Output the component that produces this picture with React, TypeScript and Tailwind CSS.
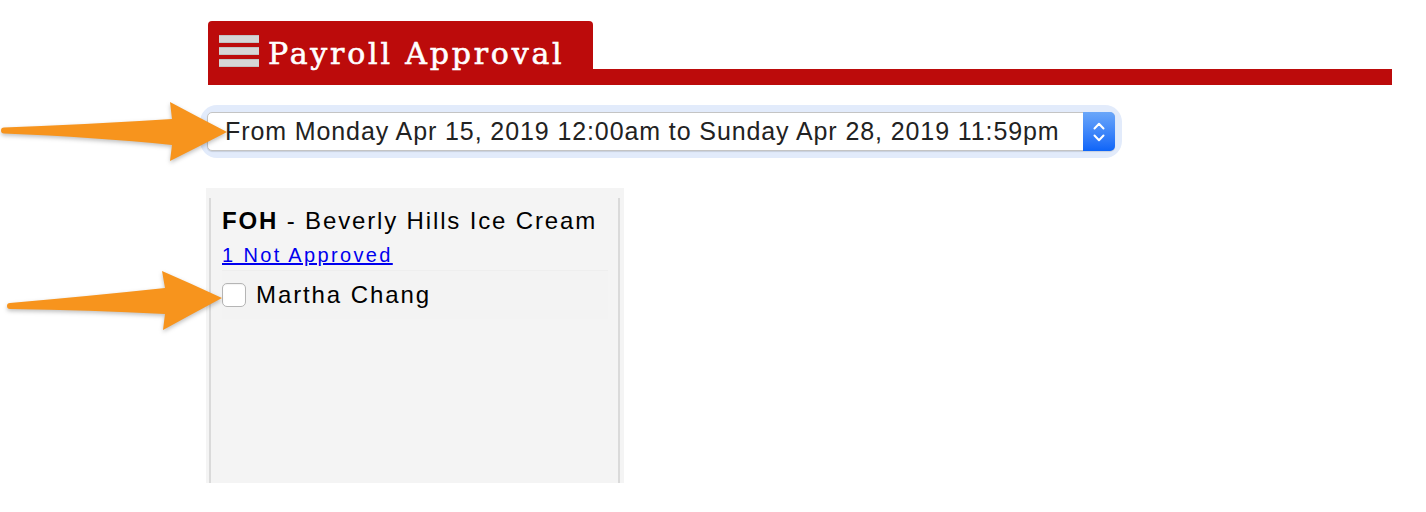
import React from "react";

const SANS = { fontFamily: '"Liberation Sans", Arial, sans-serif' };

function Arrows() {
  return (
    <svg
      className="absolute left-0 top-0 pointer-events-none"
      width="240"
      height="340"
      viewBox="0 0 240 340"
      style={{ filter: "drop-shadow(0 2px 2px rgba(0,0,0,0.25))" }}
    >
      <path
        d="M4,127.5 Q95,124 172,119 L170,102 Q198,117 227,132 Q198,147 170,161 L172,145 Q95,137 4,133.5 A3,3 0 0 1 4,127.5 Z"
        fill="#f7941d"
      />
      <path
        d="M10,303 Q90,296 165,288 L162,271 Q192,284 222,298 Q192,314 163,330 L165,314 Q90,310 10,309 A3,3 0 0 1 10,303 Z"
        fill="#f7941d"
      />
    </svg>
  );
}

function MacSelect({ value }: { value: string }) {
  return (
    <div className="w-[908px] ml-[-1px] rounded-[10px] shadow-[0_0_0_7px_#e2ebfb]">
      <div className="flex h-[39px] rounded-[5px] border border-[#c4c4c4] bg-white shadow-[0_1px_1px_rgba(0,0,0,0.12)]">
        <div
          className="flex-1 flex items-center pl-[17px] text-[25px] tracking-[0.9px] text-[#222] whitespace-nowrap"
          style={SANS}
        >
          {value}
        </div>
        <div className="w-[32px] -my-px -mr-px rounded-r-[5px] bg-gradient-to-b from-[#6aa6f9] to-[#0c64f8] flex flex-col items-center justify-center gap-[4px]">
          <svg width="12" height="8" viewBox="0 0 12 8" fill="none" stroke="white" strokeWidth="2" strokeLinecap="round" strokeLinejoin="round">
            <polyline points="1.5,6.5 6,1.8 10.5,6.5" />
          </svg>
          <svg width="12" height="8" viewBox="0 0 12 8" fill="none" stroke="white" strokeWidth="2" strokeLinecap="round" strokeLinejoin="round">
            <polyline points="1.5,1.5 6,6.2 10.5,1.5" />
          </svg>
        </div>
      </div>
    </div>
  );
}

export default function App() {
  return (
    <div className="relative bg-white w-[1426px] h-[512px] overflow-hidden">
      <div className="pl-[208px] pt-[21px] w-[1392px]">
        {/* Header tab */}
        <div className="flex items-end">
          <div className="w-[385px] h-[64px] bg-[#bc0b0b] rounded-t-[4px] flex items-start pl-[11px] pt-[14px] gap-[9px]">
            <div className="flex flex-col gap-[4px] w-[40px]">
              <div className="h-[8px] bg-[#d6d6d6] border-y border-[#c2c2c2]" />
              <div className="h-[8px] bg-[#d6d6d6] border-y border-[#c2c2c2]" />
              <div className="h-[8px] bg-[#d6d6d6] border-y border-[#c2c2c2]" />
            </div>
            <div
              className="text-white text-[30px] leading-[36px] mt-[1px] whitespace-nowrap tracking-[2.8px] [-webkit-text-stroke:0.6px_white]"
              style={{ fontFamily: '"DejaVu Serif", "Liberation Serif", serif' }}
            >
              Payroll Approval
            </div>
          </div>
          <div className="flex-1 h-[16px] bg-[#bc0b0b]" />
        </div>

        {/* Pay period select */}
        <div className="mt-[27px]">
          <MacSelect value="From Monday Apr 15, 2019 12:00am to Sunday Apr 28, 2019 11:59pm" />
        </div>

        {/* Department card */}
        <div className="mt-[37px] ml-[-2px] w-[418px] h-[295px] bg-[#f4f4f4] pt-[10px] pl-[3px] pr-[4px]">
          <div className="h-full border-x-2 border-[#dadada] pl-[11px] pr-[10px] pt-[8px]" style={SANS}>
            <div className="text-[24px] leading-[30px] tracking-[1.85px] text-black whitespace-nowrap">
              <span className="font-bold">FOH</span> - Beverly Hills Ice Cream
            </div>
            <a
              href="#"
              className="block mt-[7px] text-[20px] leading-[24px] tracking-[2.35px] text-[#0000ee] underline w-fit"
            >
              1 Not Approved
            </a>
            <div className="mt-[3px] h-[49px] flex items-center gap-[10px] border-t border-[#eeeeee] bg-[#f3f3f3]">
              <div className="w-[24px] h-[24px] rounded-[5px] border border-[#b5b5b5] bg-white shadow-[inset_0_1px_1px_rgba(0,0,0,0.05)]" />
              <span className="text-[24px] leading-[30px] tracking-[1.9px] text-black">Martha Chang</span>
            </div>
          </div>
        </div>
      </div>
      <Arrows />
    </div>
  );
}
